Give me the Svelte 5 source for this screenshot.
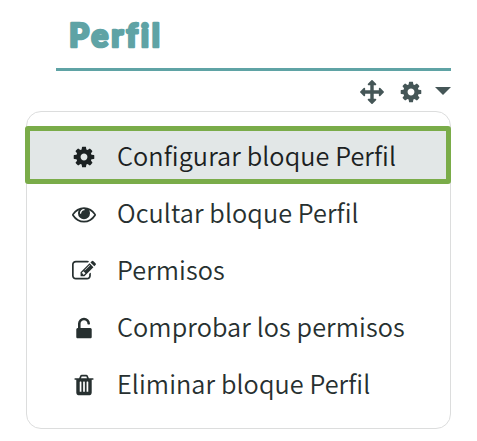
<script lang="ts">
  type IconName = "cog" | "eye" | "edit" | "unlock" | "trash" | "arrows";

  const icons: Record<IconName, string> = {
    cog: "M1152 896q0-106-75-181t-181-75-181 75-75 181 75 181 181 75 181-75 75-181zm512-109v222q0 12-8 23t-20 13l-185 28q-19 54-39 91 35 50 107 138 10 12 10 25t-9 23q-27 37-99 108t-94 71q-12 0-26-9l-138-108q-44 23-91 38-16 136-29 186-7 28-36 28h-222q-14 0-24.500-8.500t-11.500-21.500l-28-184q-49-16-90-37l-141 107q-10 9-25 9-14 0-25-11-126-114-165-168-7-10-7-23 0-12 8-23 15-21 51-66.500t54-70.500q-27-50-41-99l-183-27q-13-2-21-12.500t-8-23.500v-222q0-12 8-23t19-13l186-28q14-46 39-92-40-57-107-138-10-12-10-24 0-10 9-23 26-36 98.500-107.500t94.500-71.500q13 0 26 10l138 107q44-23 91-38 16-136 29-186 7-28 36-28h222q14 0 24.500 8.500t11.500 21.500l28 184q49 16 90 37l142-107q9-9 24-9 13 0 25 10 129 119 165 170 7 8 7 22 0 12-8 23-15 21-51 66.500t-54 70.500q26 50 41 98l183 28q13 2 21 12.500t8 23.500z",
    eye: "M1664 960q-152-236-381-353 61 104 61 225 0 185-131.500 316.500t-316.500 131.500-316.500-131.500-131.500-316.500q0-121 61-225-229 117-381 353 133 205 333.500 326.500t434.500 121.500 434.500-121.500 333.500-326.500zm-720-384q0-20-14-34t-34-14q-125 0-214.500 89.500t-89.500 214.500q0 20 14 34t34 14 34-14 14-34q0-86 61-147t147-61q20 0 34-14t14-34zm848 384q0 34-20 69-140 230-376.500 368.500t-499.500 138.500-499.500-139-376.500-368q-20-35-20-69t20-69q140-229 376.500-368t499.500-139 499.500 139 376.500 368q20 35 20 69z",
    edit: "M888 1184l116-116-152-152-116 116v56h96v96h56zm440-720q-16-16-33 1l-350 350q-17 17-1 33t33-1l350-350q17-17 1-33zm80 594v190q0 119-84.500 203.500t-203.500 84.500h-832q-119 0-203.500-84.500t-84.500-203.500v-832q0-119 84.500-203.500t203.500-84.500h832q63 0 117 25 15 7 18 23 3 17-9 29l-49 49q-14 14-32 8-23-6-45-6h-832q-66 0-113 47t-47 113v832q0 66 47 113t113 47h832q66 0 113-47t47-113v-126q0-13 9-22l64-64q15-15 35-7t20 29zm-96-738l288 288-672 672h-288v-288zm444 132l-92 92-288-288 92-92q28-28 68-28t68 28l152 152q28 28 28 68t-28 68z",
    unlock: "M1376 896q40 0 68 28t28 68v576q0 40-28 68t-68 28h-960q-40 0-68-28t-28-68v-576q0-40 28-68t68-28h32v-320q0-185 131.500-316.500t316.500-131.500 316.500 131.500 131.500 316.500q0 26-19 45t-45 19h-64q-26 0-45-19t-19-45q0-106-75-181t-181-75-181 75-75 181v320h736z",
    trash: "M704 1376v-704q0-14-9-23t-23-9h-64q-14 0-23 9t-9 23v704q0 14 9 23t23 9h64q14 0 23-9t9-23zm256 0v-704q0-14-9-23t-23-9h-64q-14 0-23 9t-9 23v704q0 14 9 23t23 9h64q14 0 23-9t9-23zm256 0v-704q0-14-9-23t-23-9h-64q-14 0-23 9t-9 23v704q0 14 9 23t23 9h64q14 0 23-9t9-23zm-544-992h448l-48-117q-7-9-17-11h-317q-10 2-17 11zm928 32v64q0 14-9 23t-23 9h-96v948q0 83-47 143.500t-113 60.500h-832q-66 0-113-58.500t-47-141.500v-952h-96q-14 0-23-9t-9-23v-64q0-14 9-23t23-9h309l70-167q15-37 54-63t79-26h320q40 0 79 26t54 63l70 167h309q14 0 23 9t9 23z",
    arrows: "M1792 896q0 26-19 45l-256 256q-19 19-45 19t-45-19-19-45v-128h-384v384h128q26 0 45 19t19 45-19 45l-256 256q-19 19-45 19t-45-19l-256-256q-19-19-19-45t19-45 45-19h128v-384h-384v128q0 26-19 45t-45 19-45-19l-256-256q-19-19-19-45t19-45l256-256q19-19 45-19t45 19 19 45v128h384v-384h-128q-26 0-45-19t-19-45 19-45l256-256q19-19 45-19t45 19l256 256q19 19 19 45t-19 45-45 19h-128v384h384v-128q0-26 19-45t45-19 45 19l256 256q19 19 19 45z",
  };

  const items: { icon: IconName; label: string }[] = [
    { icon: "cog", label: "Configurar bloque Perfil" },
    { icon: "eye", label: "Ocultar bloque Perfil" },
    { icon: "edit", label: "Permisos" },
    { icon: "unlock", label: "Comprobar los permisos" },
    { icon: "trash", label: "Eliminar bloque Perfil" },
  ];

  let selected = $state(0);
</script>

{#snippet icon(name: IconName)}
  <svg class="icon" viewBox="0 0 1792 1792" aria-hidden="true"><path d={icons[name]} /></svg>
{/snippet}

<section class="block">
  <header>
    <h2>
      <svg class="title" viewBox="0 0 110 44">
        <text x="1" y="33" textLength="91" lengthAdjust="spacing">Perfil</text>
      </svg>
    </h2>
  </header>

  <div class="controls">
    <button type="button" aria-label="Mover">{@render icon("arrows")}</button>
    <button type="button" class="toggle" aria-label="Acciones">
      {@render icon("cog")}
      <span class="caret"></span>
    </button>
  </div>

  <div class="menu" role="menu">
    {#each items as item, i}
      <button
        type="button"
        role="menuitem"
        class="item"
        class:selected={i === selected}
        onclick={() => (selected = i)}
      >
        {@render icon(item.icon)}
        <span class="label">{item.label}</span>
      </button>
    {/each}
  </div>
</section>

<style>
  :global(body) {
    background: #fff;
  }

  .block {
    box-sizing: border-box;
    width: 477px;
    height: 441px;
    padding: 14px 26px 0;
    font-family: "Noto Sans CJK SC", "Open Sans", sans-serif;
    overflow: hidden;
  }

  header {
    box-sizing: border-box;
    height: 57px;
    margin-left: 30px;
    padding-left: 12px;
    border-bottom: 3px solid #5fa3a5;
  }

  h2 {
    margin: 0;
  }

  .title {
    display: block;
    width: 110px;
    height: 44px;
    fill: #5fa3a5;
    stroke: #5fa3a5;
    stroke-width: 2.6px;
    stroke-linejoin: round;
    font-family: Lato, sans-serif;
    font-size: 32px;
    font-weight: 900;
    font-variant-ligatures: none;
  }

  button {
    display: flex;
    align-items: center;
    padding: 0;
    border: 0;
    background: none;
    color: #455657;
    font: inherit;
    cursor: pointer;
  }

  .icon {
    flex: none;
    width: 24px;
    height: 24px;
    fill: currentColor;
  }

  .controls {
    display: flex;
    justify-content: flex-end;
    gap: 15px;
    height: 40px;
    padding-top: 2px;
    box-sizing: border-box;
  }

  .toggle {
    gap: 12px;
  }

  .caret {
    border: 8px solid transparent;
    border-top-color: currentColor;
    border-bottom: 0;
    margin-top: -3px;
  }

  .menu {
    box-sizing: border-box;
    width: 425px;
    height: 318px;
    padding-top: 14px;
    border: 1px solid #dcdddd;
    border-radius: 15px;
  }

  .item {
    box-sizing: border-box;
    width: 100%;
    height: 57px;
    gap: 21px;
    padding: 3px 0 0 45px;
    color: #273030;
    font-size: 25.25px;
    font-weight: 350;
    line-height: 36px;
    white-space: nowrap;
  }

  .label {
    padding-bottom: 4px;
    letter-spacing: 0.08px;
  }

  .selected {
    width: 426px;
    height: 58px;
    margin-left: -2px;
    padding: 3px 0 0 42px;
    border: 5px solid #7aac49;
    border-radius: 3px;
    background: #e2e7e7;
    color: #1b2122;
  }
</style>
